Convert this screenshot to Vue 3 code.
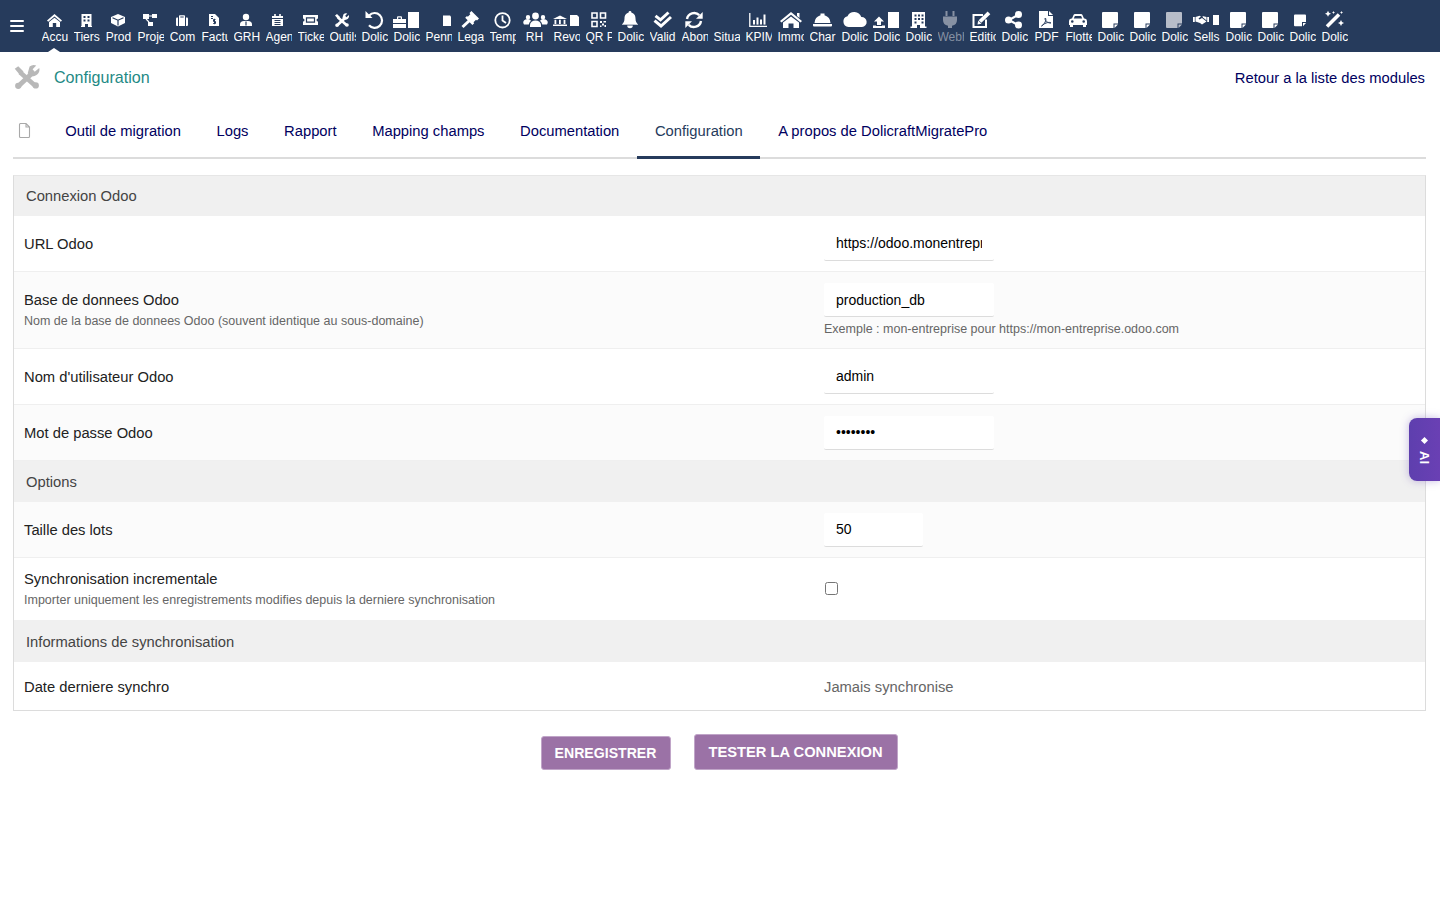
<script setup>
const p = (d) => ({ d, fill: 'currentColor', stroke: 'none', sw: 0, rule: 'evenodd' })
const s = (d, sw = 2) => ({ d, fill: 'none', stroke: 'currentColor', sw, rule: 'nonzero' })
const k = (d, sw = 1) => ({ d, fill: 'none', stroke: '#263b5c', sw, rule: 'nonzero' })
const circle = (cx, cy, r) => `M${cx - r} ${cy}a${r} ${r} 0 1 0 ${2 * r} 0a${r} ${r} 0 1 0 ${-2 * r} 0Z`
const doc = (x, y, w, h) => `M${x} ${y}H${x + w}V${y + h}H${x}Z`
const note = [p('M9 3H23a1 1 0 0 1 1 1V14.5H19.500V19H9a1 1 0 0 1-1-1V4a1 1 0 0 1 1-1Z'), p('M20.500 19L24 15.500H20.500Z')]
const toolsShape = [
  s('M12 8.500L21 16.500', 2.6),
  p('M9 6.500L11 5L14 8L12 10Z'),
  p(circle(21, 16, 1.8)),
  s('M11 16.500L19.500 8.500', 2.8),
  p(circle(11, 16.200, 1.8)),
  p('M17.500 5.200A3.800 3.800 0 0 1 21.300 4.600L19.200 6.800L20.400 8.200L23 6A3.800 3.800 0 0 1 18.300 10.600L16.400 9Z'),
]

const icons = {
  home: [p('M16.5 5L24 11.5L22.8 12.8L16.5 7.6L10.2 12.8L9 11.5Z'), p('M11 13L16.5 8.8L22 13V18H18.2V14H14.8V18H11Z')],
  tiers: [p('M11.5 5H21.5V17H22V18H18V15H15V18H11V17H11.5ZM13.5 7v2h2V7ZM17.5 7v2h2V7ZM13.5 10.5v2h2v-2ZM17.5 10.5v2h2v-2Z')],
  cube: [p('M16 5L23 8V14L16 17.5L9 14V8Z'), k('M10.5 8.8L16 11.2L21.5 8.8M16 11.2V16.5', 1.2)],
  diagram: [p(doc(9, 5, 6, 5)), p(doc(18, 5, 5, 4)), p(doc(14, 13, 5, 4)), s('M15 7H18M12 10L15 13', 1.2)],
  briefcase: [p('M10 9.5a1 1 0 0 1 1-1H12V17H11a1 1 0 0 1-1-1Z'), p('M20 8.5H21a1 1 0 0 1 1 1V16a1 1 0 0 1-1 1H20Z'), p('M13 8.5V7a.8.8 0 0 1 .8-.8H18.2a.8.8 0 0 1 .8.8V8.5V17H13ZM14.3 7.4V8.5H17.7V7.4Z')],
  invoice: [p('M11 5H17L21 9V17H11Z'), k('M13 7.5H15M13 9.5H15M17.5 10.5H15.5V12.5H17.5V14.5H15.2M16.5 9.8V15.2', 1)],
  userTie: [p(circle(16, 8, 3.2)), p('M10 17V15.5A4 3.5 0 0 1 14 12H18A4 3.5 0 0 1 22 15.5V17Z'), k('M16 12.5V16.5', 1.2)],
  calendar: [p('M10 7H21V17H10Z'), p(doc(12.2, 5, 1.6, 2.5)), p(doc(17.2, 5, 1.6, 2.5)), k('M10 9.5H21M12.5 11.5H18.5M12.5 13.5H18.5M12.5 15.5H18.5', 1)],
  ticket: [p('M9 6H24V9.5a1.5 1.5 0 0 0 0 3V16H9V12.5a1.5 1.5 0 0 0 0-3Z'), k('M12.5 8.8H20.5V13.2H12.5Z', 1.2)],
  tools: toolsShape,
  undo: [s('M11.2 6.4A7.4 7.4 0 1 1 11 16.2', 2.2), p('M7.5 2V9H14.5Z')],
  briefDoc: [p('M3 10H7V8.2A1 1 0 0 1 8 7.2H11A1 1 0 0 1 12 8.2V10H16V19H3ZM8.2 8.4V10H10.8V8.4Z'), k('M3 14.5H16', 1), p('M18 3H29V19H18Z')],
  smallDoc: [p('M21 6.5H28L29 7.5V17H21Z')],
  gavel: [p('M17.4 2L25 9.6L23 11.6L22 10.8L19.5 13.3L20.2 14.2L18.4 16L11.2 8.8L13 7L13.8 7.7L16.3 5.2L15.5 4Z'), s('M15.5 11.5L8.5 18', 3)],
  clock: [s('M9.3 11.3a7.2 7.2 0 1 0 14.4 0a7.2 7.2 0 1 0-14.4 0Z', 1.8), s('M16.5 6.5V11.5L20 14', 1.8)],
  users: [p(circle(17.5, 7, 3.4)), p(circle(10, 8.2, 2.2)), p(circle(25, 8.2, 2.2)), p('M12 18V16A5.5 4.5 0 0 1 23 16V18Z'), p('M6 15.5A4 3.5 0 0 1 13 11.8A6 6 0 0 0 10.8 15.5Z'), p('M29 15.5A4 3.5 0 0 0 22 11.8A6 6 0 0 1 24.2 15.5Z')],
  bankDoc: [p('M3 10L10 6.5L17 10Z'), p(doc(4.5, 10.8, 1.8, 4.2)), p(doc(9, 10.8, 1.8, 4.2)), p(doc(13.6, 10.8, 1.8, 4.2)), p(doc(3, 15.5, 14, 1.5)), p('M20 6H27L29 8V17H20Z')],
  qr: [s('M10 4H15V9H10ZM18.5 4H23.5V9H18.5ZM10 12.5H15V17.5H10Z', 1.6), p(doc(18, 12, 2, 2)), p(doc(21.5, 12, 2.5, 1.5)), p(doc(20, 14.5, 2, 2)), p(doc(22.5, 16, 1.5, 2)), p(doc(18, 16.5, 1.5, 1.5))],
  bell: [p('M16 3.5C12.5 3.5 10.5 6 10.5 9.5C10.5 12.5 9.5 14 8 15.5H24C22.5 14 21.5 12.5 21.5 9.5C21.5 6 19.5 3.5 16 3.5Z'), p(circle(16, 3.3, 1.4)), p('M13.2 16.5A2.8 2.8 0 0 0 18.8 16.5Z'), p(doc(8, 15.5, 16, 0.4))],
  check: [s('M9.5 6.8L14.5 10.8L22.5 3.5', 3), s('M8.5 11.6L15 17L25 8', 3)],
  sync: [s('M9 10A7.2 7.2 0 0 1 21.3 6.2', 2.4), p('M24.7 3V9.7H18Z'), s('M23 12A7.2 7.2 0 0 1 10.7 15.8', 2.4), p('M7.3 19V12.3H14Z')],
  chart: [s('M7.8 4V17.4H25', 1.3), p(doc(11, 11, 2, 4.6)), p(doc(14.5, 8.5, 2, 7.1)), p(doc(18, 10.5, 2, 5.1)), p(doc(21.5, 5.5, 2, 10.1))],
  house: [p('M17 3L28 12L26.5 13.5L17 5.8L7.5 13.5L6 12Z'), p('M23 4H25.5V9L23 7Z'), p('M9 13.5L17 7.5L25 13.5V19H19.5V14.5H14.5V19H9Z')],
  hat: [p('M8.5 14A8.5 8.5 0 0 1 14.5 6.2V4.5H18.5V6.2A8.5 8.5 0 0 1 24.5 14Z'), p('M7 15H26V16.5A1 1 0 0 1 25 17.5H8A1 1 0 0 1 7 16.5Z')],
  cloud: [p('M10.5 18A5.5 5.5 0 0 1 9.5 7.2A7.5 7.5 0 0 1 23.3 8A5 5 0 0 1 24 18Z')],
  uploadDoc: [p('M9 7.5L14 12.5H11V16H7V12.5H4Z'), p('M3 16.5H6V17H12V16.5H15V19H3Z'), p('M18 3H29V19H18Z')],
  office: [p('M10 3H23V17.5H24.5V19H18V16H15V19H8.5V17.5H10ZM12.5 5.5v2h2v-2ZM16 5.5v2h2v-2ZM19.5 5.5v2h2v-2ZM12.5 9v2h2V9ZM16 9v2h2V9ZM19.5 9v2h2V9ZM12.5 12.5v2h2v-2ZM19.5 12.5v2h2v-2Z')],
  plug: [p(doc(11.5, 2, 2, 5)), p(doc(18.5, 2, 2, 5)), p('M9 7.5H23V11A6 6 0 0 1 18 16.8V19H14V16.8A6 6 0 0 1 9 11Z')],
  edit: [s('M17 6H7.5V18H20V10.5', 2), s('M14 12.5L23 3.8', 3.8), p('M11.5 15.5L12.2 11.5L15.5 14.8Z')],
  share: [p(circle(20.5, 5.5, 3.5)), p(circle(10.5, 11, 3.5)), p(circle(20.5, 16, 3.5)), s('M20 6L11 11L20 16', 2.2)],
  pdf: [p('M9 2H18V7H23V19H9Z'), p('M19 2L23 6H19Z'), k('M11.5 17C14.5 15.5 17 10.5 15.3 9C14 10.5 17.5 14.5 21 14C20 12.8 15.5 13.2 11.5 17Z', 1)],
  car: [p('M10 9.5L11.5 6A1.6 1.6 0 0 1 13 5H19A1.6 1.6 0 0 1 20.5 6L22 9.5A2.6 2.6 0 0 1 25 12V16H24V18H21V16H11V18H8V16H7V12A2.6 2.6 0 0 1 10 9.5Z'), { d: 'M11.8 9.5L12.9 6.9H19.1L20.2 9.5Z', fill: '#263b5c', stroke: 'none', sw: 0, rule: 'nonzero' }, { d: circle(10.3, 12.5, 1.3), fill: '#263b5c', stroke: 'none', sw: 0, rule: 'nonzero' }, { d: circle(21.7, 12.5, 1.3), fill: '#263b5c', stroke: 'none', sw: 0, rule: 'nonzero' }],
  note,
  smallNote: [p('M9 5.5H19a1 1 0 0 1 1 1V13H16V17.2H9a1 1 0 0 1-1-1V6.5a1 1 0 0 1 1-1Z'), p('M17 17.2L20 14H17Z')],
  shake: [p(doc(3, 8, 1.8, 5)), p(doc(17.2, 8, 1.8, 5)), p('M5.5 8L9.5 6.8L11 7.5L8.5 9.5L9.5 10.5L12 9L16.5 12.5L12 15.5L10 14L5.5 12.5Z'), p('M12.5 7L16.5 8V11.5L13 8.5Z'), p(doc(23, 6, 6, 10))],
  wand: [s('M9 17.5L21 5.5', 3.6), p('M10 1.8L11 3.8L13 4.8L11 5.8L10 7.8L9 5.8L7 4.8L9 3.8Z'), p('M23 11L24 13L26 14L24 15L23 17L22 15L20 14L22 13Z'), p('M15.5 2L16 3L17 3.5L16 4L15.5 5L15 4L14 3.5L15 3Z'), p('M23.5 2L24 3L25 3.5L24 4L23.5 5L23 4L22 3.5L23 3Z')],
  none: [],
}

const navItems = [
  ['Accu', 'home'], ['Tiers', 'tiers'], ['Prod', 'cube'], ['Proje', 'diagram'], ['Com', 'briefcase'],
  ['Factu', 'invoice'], ['GRH', 'userTie'], ['Agen', 'calendar'], ['Ticke', 'ticket'], ['Outils', 'tools'],
  ['Dolic', 'undo'], ['Dolic', 'briefDoc'], ['Penn', 'smallDoc'], ['Lega', 'gavel'], ['Temp', 'clock'],
  ['RH', 'users'], ['Revo', 'bankDoc'], ['QR P', 'qr'], ['Dolic', 'bell'], ['Valid', 'check'],
  ['Abon', 'sync'], ['Situa', 'none'], ['KPIM', 'chart'], ['Immo', 'house'], ['Char', 'hat'],
  ['Dolic', 'cloud'], ['Dolic', 'uploadDoc'], ['Dolic', 'office'], ['Webh', 'plug', 'muted'], ['Editio', 'edit'],
  ['Dolic', 'share'], ['PDF', 'pdf'], ['Flotte', 'car'], ['Dolic', 'note'], ['Dolic', 'note'],
  ['Dolic', 'note', 'soft'], ['Sells', 'shake'], ['Dolic', 'note'], ['Dolic', 'note'], ['Dolic', 'smallNote'],
  ['Dolic', 'wand'],
].map(([label, icon, tone]) => ({ label, shapes: icons[icon], tone }))

const tabs = ['Outil de migration', 'Logs', 'Rapport', 'Mapping champs', 'Documentation', 'Configuration', 'A propos de DolicraftMigratePro']

const toolsIcon = toolsShape
</script>

<template>
  <div class="page">
    <header class="topbar">
      <button class="burger" aria-label="Menu"><span></span><span></span><span></span></button>
      <nav class="mainnav">
        <a v-for="(item, i) in navItems" :key="i" class="navitem" :class="item.tone">
          <svg width="32" height="22" viewBox="0 0 32 22" class="navicon">
            <path v-for="(sh, j) in item.shapes" :key="j" :d="sh.d" :fill="sh.fill" :stroke="sh.stroke" :stroke-width="sh.sw" :fill-rule="sh.rule" />
          </svg>
          <span class="navlabel">{{ item.label }}</span>
          <i v-if="i === 0" class="caret"></i>
        </a>
      </nav>
    </header>

    <div class="titlebar">
      <div class="title">
        <svg class="titleicon" width="28" height="28" viewBox="8 4 16 15.5">
          <path v-for="(sh, j) in toolsIcon" :key="j" :d="sh.d" :fill="sh.fill" :stroke="sh.stroke" :stroke-width="sh.sw" :fill-rule="sh.rule" />
        </svg>
        <span>Configuration</span>
      </div>
      <a class="back">Retour a la liste des modules</a>
    </div>

    <div class="tabs">
      <svg class="tabdoc" width="13" height="15" viewBox="0 0 13 15">
        <path d="M1.5 1.5a1 1 0 0 1 1-1H8L11.5 4V13.5a1 1 0 0 1-1 1H2.500a1 1 0 0 1-1-1Z M8 .5V4H11.5" fill="none" stroke="#a9a9a9" stroke-width="1.1" />
      </svg>
      <a v-for="t in tabs" :key="t" class="tab" :class="{ active: t === 'Configuration' }">{{ t }}</a>
    </div>

    <section class="panel">
      <h3 class="section first">Connexion Odoo</h3>
      <div class="row h56">
        <div class="lab"><div>URL Odoo</div></div>
        <div class="val"><input class="field" type="text" value="https://odoo.monentreprise.odoo.com" /></div>
      </div>
      <div class="row odd base">
        <div class="lab">
          <div>Base de donnees Odoo</div>
          <div class="hint">Nom de la base de donnees Odoo (souvent identique au sous-domaine)</div>
        </div>
        <div class="val">
          <input class="field" type="text" value="production_db" />
          <div class="hint under">Exemple : mon-entreprise pour https://mon-entreprise.odoo.com</div>
        </div>
      </div>
      <div class="row h56">
        <div class="lab"><div>Nom d'utilisateur Odoo</div></div>
        <div class="val"><input class="field" type="text" value="admin" /></div>
      </div>
      <div class="row odd h56">
        <div class="lab"><div>Mot de passe Odoo</div></div>
        <div class="val"><input class="field" type="password" value="password" /></div>
      </div>

      <h3 class="section second">Options</h3>
      <div class="row odd h56">
        <div class="lab"><div>Taille des lots</div></div>
        <div class="val"><input class="field short" type="text" value="50" /></div>
      </div>
      <div class="row h62">
        <div class="lab">
          <div>Synchronisation incrementale</div>
          <div class="hint">Importer uniquement les enregistrements modifies depuis la derniere synchronisation</div>
        </div>
        <div class="val"><input class="check" type="checkbox" /></div>
      </div>

      <h3 class="section third">Informations de synchronisation</h3>
      <div class="row last">
        <div class="lab"><div>Date derniere synchro</div></div>
        <div class="val muted">Jamais synchronise</div>
      </div>
    </section>

    <div class="actions">
      <button class="btn">ENREGISTRER</button>
      <button class="btn tall">TESTER LA CONNEXION</button>
    </div>

    <aside class="aitab">
      <span class="diamond"></span>
      <span class="aitext">AI</span>
    </aside>
  </div>
</template>

<style scoped>
.page {
  position: relative;
  min-height: 900px;
  background: #fff;
  font-family: "Liberation Sans", Arial, sans-serif;
  font-size: 14.75px;
  color: #222;
  overflow: hidden;
}
.topbar {
  display: flex;
  height: 52px;
  background: #263b5c;
}
.burger {
  display: flex;
  flex-direction: column;
  gap: 3px;
  width: 14px;
  height: 12px;
  margin: 20px 14px 0 10px;
  padding: 0;
  border: 0;
  background: none;
}
.burger span {
  display: block;
  height: 2px;
  width: 14px;
  background: #fff;
  border-radius: 1px;
}
.mainnav {
  display: flex;
}
.navitem {
  position: relative;
  display: flex;
  flex-direction: column;
  width: 32px;
  height: 52px;
  padding-top: 9px;
  box-sizing: border-box;
  color: #fff;
}
.navitem.muted {
  color: #8791a3;
}
.navitem.soft .navicon {
  color: #b7bdc9;
}
.navicon {
  display: block;
  overflow: visible;
}
.navlabel {
  display: block;
  width: 26px;
  height: 14px;
  margin-left: 3.5px;
  overflow: hidden;
  font-size: 12px;
  line-height: 13px;
  text-align: center;
  white-space: nowrap;
}
.caret {
  position: absolute;
  left: 10px;
  bottom: 0;
  width: 0;
  height: 0;
  border-left: 6px solid transparent;
  border-right: 6px solid transparent;
  border-bottom: 4px solid #fff;
}
.titlebar {
  display: flex;
  align-items: center;
  justify-content: space-between;
  height: 51px;
  padding: 0 15px 0 13px;
}
.title {
  display: flex;
  align-items: center;
  gap: 13px;
  font-size: 16.1px;
  color: #1f8a85;
}
.titleicon {
  color: #b8b8b8;
}
.back {
  color: #000060;
}
.tabs {
  display: flex;
  align-items: center;
  height: 54px;
  margin: 0 14px 0 13px;
  border-bottom: 2px solid #dcdcdc;
}
.tabdoc {
  margin: 0 16.500px 0 5px;
}
.tab {
  display: flex;
  align-items: center;
  height: 56px;
  margin-bottom: -2px;
  padding: 2px 17.8px 0;
  box-sizing: border-box;
  color: #000060;
  border-bottom: 3px solid transparent;
}
.tab.active {
  color: #263b5c;
  border-bottom-color: #263b5c;
}
.panel {
  margin: 16px 14px 0 13px;
  border: 1px solid #dcdcdc;
  border-top-color: #e6e6e6;
}
.section {
  margin: 0;
  height: 41px;
  padding-left: 12px;
  background: #f0f0f0;
  font-size: 14.75px;
  font-weight: 400;
  line-height: 41px;
  color: #444;
}
.section.first {
  height: 40px;
  line-height: 40px;
}
.section.second {
  line-height: 43px;
}
.section.third {
  height: 42px;
  line-height: 45px;
}
.row {
  display: flex;
  align-items: center;
  padding-left: 10px;
  border-bottom: 1px solid #efefef;
  box-sizing: border-box;
  color: #222;
}
.row.odd {
  background: #fbfbfb;
}
.row.h56 {
  height: 56px;
}
.row.h62 {
  height: 62px;
  border-bottom: 0;
}
.row.base {
  height: 77px;
}
.row.last {
  height: 48px;
  padding-top: 2px;
  border-bottom: 0;
}
.lab {
  width: 800px;
  flex: none;
  line-height: 18px;
}
.hint {
  margin-top: 4px;
  font-size: 12.5px;
  line-height: 16px;
  color: #666;
}
.field {
  display: block;
  width: 170px;
  height: 34px;
  padding: 0 12px;
  box-sizing: border-box;
  border: 0;
  border-bottom: 1px solid #dcdcdc;
  border-radius: 2px;
  background: #fff;
  outline: none;
  font-family: inherit;
  font-size: 14px;
  color: #000;
}
.field.short {
  width: 99px;
}
.check {
  display: block;
  width: 13px;
  height: 13px;
  margin: -2px 0 0 1px;
}
.muted {
  color: #666;
}
.actions {
  display: flex;
  justify-content: center;
  align-items: flex-end;
  gap: 23px;
  margin-top: 23px;
  padding-right: 2px;
}
.btn {
  height: 34px;
  width: 130px;
  padding: 0;
  border: 1px solid #c0a5c8;
  border-radius: 3px;
  background: #9b72a6;
  font-family: inherit;
  font-size: 14.1px;
  font-weight: 700;
  color: #fff;
}
.btn.tall {
  width: 204px;
  height: 36px;
  font-size: 14.7px;
}
.aitab {
  position: absolute;
  top: 418px;
  right: 0;
  display: flex;
  flex-direction: column;
  align-items: center;
  gap: 8px;
  width: 31px;
  height: 63px;
  padding-top: 20px;
  box-sizing: border-box;
  border-radius: 8px 0 0 8px;
  background: linear-gradient(90deg, #5e3fae, #6a40b4);
  box-shadow: 0 0 8px rgba(94, 63, 174, 0.35);
  color: #fff;
}
.diamond {
  width: 5px;
  height: 5px;
  background: #fff;
  transform: rotate(45deg);
}
.aitext {
  writing-mode: vertical-rl;
  font-size: 13px;
  font-weight: 700;
  line-height: 13px;
}
</style>
